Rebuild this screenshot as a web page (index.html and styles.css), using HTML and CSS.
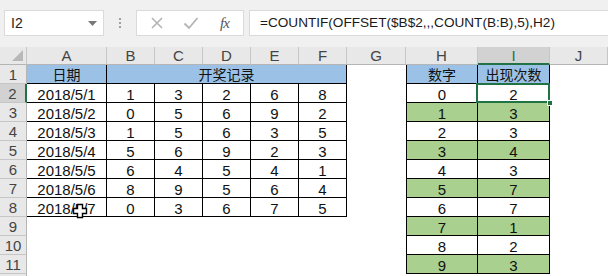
FILE: index.html
```html
<!DOCTYPE html>
<html lang="zh-CN">
<head>
  <meta charset="UTF-8">
  <title>出现次数统计</title>
  <link rel="stylesheet" href="styles.css">
</head>
<body>
  <div class="app">
    <!-- 编辑栏 -->
    <div class="formula-bar">
      <div class="name-box">
        <span>I2</span>
        <svg class="caret" width="9" height="5" viewBox="0 0 9 5"><path d="M0 0h9L4.5 5z" fill="#777"/></svg>
      </div>
      <div class="grip"><span></span><span></span><span></span></div>
      <div class="fx-buttons">
        <svg width="14" height="14" viewBox="0 0 14 14"><path d="M2 2l10 10M12 2L2 12" stroke="#b4b4b4" stroke-width="1.6" fill="none"/></svg>
        <svg width="16" height="14" viewBox="0 0 16 14"><path d="M1.5 7.5l4.5 4.5L14.5 2" stroke="#b4b4b4" stroke-width="1.8" fill="none"/></svg>
        <i class="fx">fx</i>
      </div>
      <div class="formula">=COUNTIF(OFFSET($B$2,,,COUNT(B:B),5),H2)</div>
    </div>

    <!-- 工作表 -->
    <div class="sheet">
      <div class="corner"><svg width="11" height="11" viewBox="0 0 11 11"><path d="M11 0v11H0z" fill="#b8b8b8"/></svg></div>
      <div class="ch">A</div><div class="ch">B</div><div class="ch">C</div><div class="ch">D</div><div class="ch">E</div>
      <div class="ch">F</div><div class="ch">G</div><div class="ch">H</div><div class="ch sel">I</div><div class="ch">J</div>

      <div class="rh">1</div>
      <div class="c hd cjk">日期</div>
      <div class="c hd cjk span5">开奖记录</div>
      <div class="c"></div>
      <div class="c hd cjk bl">数字</div>
      <div class="c hd cjk">出现次数</div>
      <div class="c"></div>

      <div class="rh sel">2</div>
      <div class="c d">2018/5/1</div><div class="c d">1</div><div class="c d">3</div><div class="c d">2</div><div class="c d">6</div><div class="c d">8</div>
      <div class="c"></div><div class="c d bl">0</div><div class="c d active">2</div><div class="c"></div>

      <div class="rh">3</div>
      <div class="c d">2018/5/2</div><div class="c d">0</div><div class="c d">5</div><div class="c d">6</div><div class="c d">9</div><div class="c d">2</div>
      <div class="c"></div><div class="c d g bl">1</div><div class="c d g">3</div><div class="c"></div>

      <div class="rh">4</div>
      <div class="c d">2018/5/3</div><div class="c d">1</div><div class="c d">5</div><div class="c d">6</div><div class="c d">3</div><div class="c d">5</div>
      <div class="c"></div><div class="c d bl">2</div><div class="c d">3</div><div class="c"></div>

      <div class="rh">5</div>
      <div class="c d">2018/5/4</div><div class="c d">5</div><div class="c d">6</div><div class="c d">9</div><div class="c d">2</div><div class="c d">3</div>
      <div class="c"></div><div class="c d g bl">3</div><div class="c d g">4</div><div class="c"></div>

      <div class="rh">6</div>
      <div class="c d">2018/5/5</div><div class="c d">6</div><div class="c d">4</div><div class="c d">5</div><div class="c d">4</div><div class="c d">1</div>
      <div class="c"></div><div class="c d bl">4</div><div class="c d">3</div><div class="c"></div>

      <div class="rh">7</div>
      <div class="c d">2018/5/6</div><div class="c d">8</div><div class="c d">9</div><div class="c d">5</div><div class="c d">6</div><div class="c d">4</div>
      <div class="c"></div><div class="c d g bl">5</div><div class="c d g">7</div><div class="c"></div>

      <div class="rh">8</div>
      <div class="c d">2018/5/7</div><div class="c d">0</div><div class="c d">3</div><div class="c d">6</div><div class="c d">7</div><div class="c d">5</div>
      <div class="c"></div><div class="c d bl">6</div><div class="c d">7</div><div class="c"></div>

      <div class="rh">9</div>
      <div class="c"></div><div class="c"></div><div class="c"></div><div class="c"></div><div class="c"></div><div class="c"></div>
      <div class="c"></div><div class="c d g bl">7</div><div class="c d g">1</div><div class="c"></div>

      <div class="rh">10</div>
      <div class="c"></div><div class="c"></div><div class="c"></div><div class="c"></div><div class="c"></div><div class="c"></div>
      <div class="c"></div><div class="c d bl">8</div><div class="c d">2</div><div class="c"></div>

      <div class="rh">11</div>
      <div class="c"></div><div class="c"></div><div class="c"></div><div class="c"></div><div class="c"></div><div class="c"></div>
      <div class="c"></div><div class="c d g bl">9</div><div class="c d g">3</div><div class="c"></div>

      <div class="rh"></div>

      <!-- 鼠标指针 -->
      <svg class="pointer" width="16" height="16" viewBox="0 0 16 16">
        <path d="M5.5 1.5h5v4h4v5h-4v4h-5v-4h-4v-5h4z" fill="#fff" stroke="#000" stroke-width="1.4"/>
      </svg>
    </div>
  </div>
</body>
</html>
```

FILE: styles.css
```css
:root {
  --bar: #f0f0f0;
  --head: #e8e8e8;
  --head-sel: #d2d2d2;
  --head-line: #c6c6c6;
  --excel: #217346;
  --blue: #9bc2e6;
  --green: #a9d08e;
  --text: #111;
}
*, *::before, *::after {
  box-sizing: border-box;
}
body {
  margin: 0;
  background: #fff;
  font-family: "Liberation Sans", "Noto Sans CJK SC", sans-serif;
  color: var(--text);
}
.app {
  width: 608px;
  height: 276px;
  overflow: hidden;
}

/* 编辑栏 */
.formula-bar {
  height: 47px;
  background: var(--bar);
  display: flex;
  align-items: flex-start;
  padding: 10px 0 0 4px;
}
.name-box {
  width: 100px;
  height: 26px;
  background: #fff;
  border: 1px solid #dadada;
  display: flex;
  align-items: center;
  justify-content: space-between;
  padding: 0 6px 0 6px;
  font-size: 14px;
  color: #222;
}
.grip {
  width: 32px;
  height: 26px;
  display: flex;
  flex-direction: column;
  align-items: center;
  justify-content: center;
  gap: 2px;
}
.grip span {
  width: 2px;
  height: 2px;
  background: #a0a0a0;
}
.fx-buttons {
  width: 108px;
  height: 26px;
  background: #fff;
  border: 1px solid #dadada;
  display: flex;
  align-items: center;
  padding: 0 0 0 13px;
  gap: 19px;
}
.fx {
  font-family: "Liberation Serif", "DejaVu Serif", serif;
  font-size: 15px;
  color: #555;
  letter-spacing: -1px;
  margin-left: 2px;
}
.formula {
  flex: 1;
  height: 26px;
  margin-left: 5px;
  background: #fff;
  border: 1px solid #dadada;
  border-right: none;
  padding: 0 0 0 10px;
  font-size: 13.6px;
  line-height: 24px;
  color: #1a1a1a;
  white-space: nowrap;
}

/* 工作表 */
.sheet {
  position: relative;
  display: grid;
  grid-template-columns: 27px 80px 48px 48px 48px 48px 48px 59px 72px 72px 1fr;
  grid-template-rows: 18px repeat(12, 19px);
}
.corner {
  background: var(--head);
  border-right: 1px solid var(--head-line);
  border-bottom: 1px solid #b5b5b5;
  display: flex;
  align-items: flex-end;
  justify-content: flex-end;
  padding: 0 3px 3px 0;
}
.ch {
  background: var(--head);
  border-right: 1px solid var(--head-line);
  border-bottom: 1px solid #b5b5b5;
  font-size: 15px;
  color: #444;
  text-align: center;
  line-height: 18px;
}
.ch.sel {
  background: var(--head-sel);
  color: var(--excel);
  border-bottom: 2px solid var(--excel);
}
.rh {
  background: var(--head);
  border-right: 1px solid #b5b5b5;
  border-bottom: 1px solid var(--head-line);
  font-size: 15px;
  color: #444;
  text-align: center;
  line-height: 19px;
}
.rh.sel {
  background: var(--head-sel);
  border-right: 2px solid var(--excel);
}
.c {
  font-size: 15px;
  line-height: 19px;
  padding-top: 1px;
  text-align: center;
  white-space: nowrap;
}
.d {
  border-right: 1px solid #000;
  border-bottom: 1px solid #000;
}
.hd {
  background: var(--blue);
  border-right: 1px solid #000;
  border-bottom: 1px solid #000;
}
.cjk {
  font-size: 14px;
  padding-top: 0;
  font-family: "Noto Sans CJK SC", sans-serif;
}
.span5 {
  grid-column: span 5;
}
.bl {
  border-left: 1px solid #000;
}
.g {
  background: var(--green);
}
.active {
  position: relative;
}
.active::before {
  content: "";
  position: absolute;
  inset: -1px -1px -1px -2px;
  border: 2px solid var(--excel);
}
.active::after {
  content: "";
  position: absolute;
  right: -4px;
  bottom: -4px;
  width: 6px;
  height: 6px;
  background: var(--excel);
  border: 1px solid #fff;
}
.pointer {
  position: absolute;
  left: 72px;
  top: 156px;
}
```
